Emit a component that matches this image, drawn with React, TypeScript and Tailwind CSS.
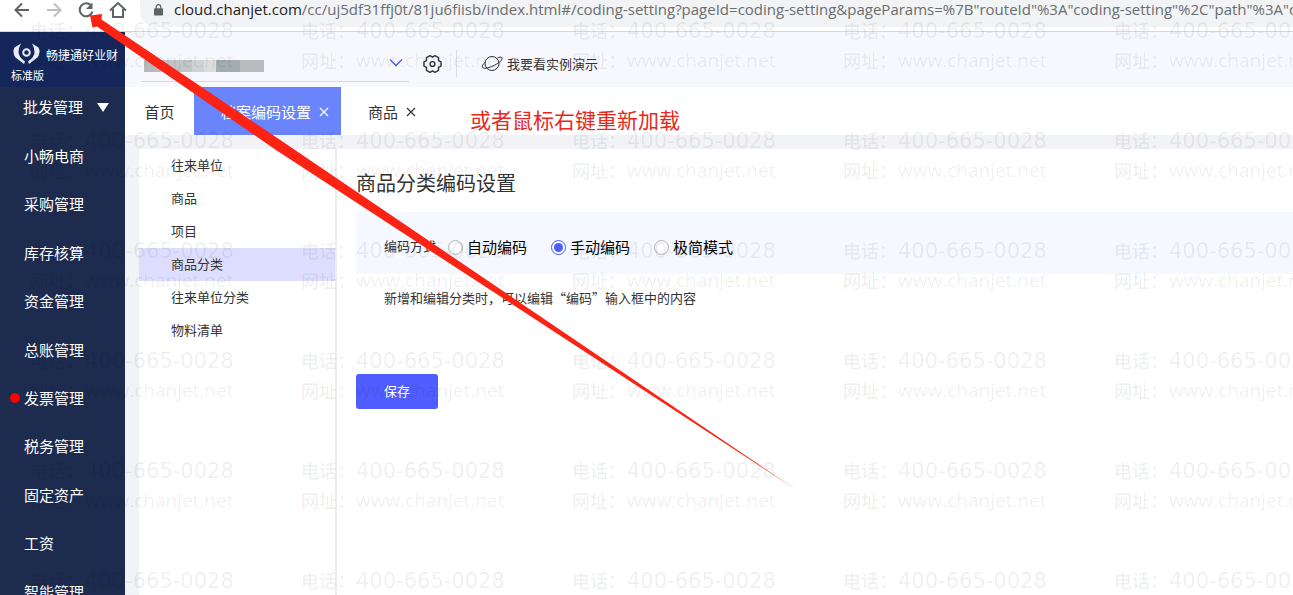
import React from "react";

const modules = ["小畅电商", "采购管理", "库存核算", "资金管理", "总账管理", "发票管理", "税务管理", "固定资产", "工资", "智能管理"];
const categories = ["往来单位", "商品", "项目", "商品分类", "往来单位分类", "物料清单"];
const modes = ["自动编码", "手动编码", "极简模式"];

function BrowserBar() {
  const icon = "flex h-8 w-8 items-center justify-center text-[#5f6368]";
  return (
    <header className="flex h-8 shrink-0 items-start border-b border-[#d5d7da] bg-white">
      <div className="-mt-1.5 flex h-8 shrink-0 pl-1.5">
        <button aria-label="后退" className={icon}>
          <svg width="18" height="18" viewBox="0 0 18 18" fill="none" stroke="currentColor" strokeWidth="2"><path d="M16 9H3M9 2.5 2.5 9 9 15.5" /></svg>
        </button>
        <button aria-label="前进" className="flex h-8 w-8 items-center justify-center text-[#bcbec1]">
          <svg width="18" height="18" viewBox="0 0 18 18" fill="none" stroke="currentColor" strokeWidth="2"><path d="M2 9h13M9 2.5 15.5 9 9 15.5" /></svg>
        </button>
        <button aria-label="重新加载" className={icon}>
          <svg width="18" height="18" viewBox="0 0 18 18" fill="none" stroke="currentColor" strokeWidth="2"><path d="M14.5 5A6.5 6.5 0 1 0 15.5 10.5" /><path d="M15.5 1.5v6.5H9z" fill="currentColor" stroke="none" /></svg>
        </button>
        <button aria-label="主页" className={icon}>
          <svg width="18" height="18" viewBox="0 0 18 18" fill="none" stroke="currentColor" strokeWidth="2"><path d="M1 9.5 9 2l8 7.5M4 8v8h10V8" /></svg>
        </button>
      </div>
      <div className="ml-1.5 flex h-[27px] min-w-0 flex-1 items-start overflow-hidden rounded-bl-2xl bg-[#f1f3f4] pl-3.5">
        <svg className="mt-1 shrink-0" width="9" height="12" viewBox="0 0 10 13"><rect y="4.5" width="10" height="8" rx="1" fill="#5f6368" /><path d="M2.5 5V3a2.5 2.5 0 0 1 5 0v2" fill="none" stroke="#5f6368" strokeWidth="1.4" /></svg>
        <p className="ml-[11px] whitespace-nowrap font-['Open_Sans',sans-serif] text-[15px] leading-[18px] text-[#6a6d71]">
          <span className="text-[#202124]">cloud.chanjet.com</span>
          {'/cc/uj5df31ffj0t/81ju6fiisb/index.html#/coding-setting?pageId=coding-setting&pageParams=%7B"routeId"%3A"coding-setting"%2C"path"%3A"cod'}
        </p>
      </div>
    </header>
  );
}

function Sidebar() {
  return (
    <aside className="w-[125px] shrink-0 overflow-hidden bg-[#1d2b4f] text-white">
      <div className="h-[55px] bg-[#15265a] pl-[11px] pt-2.5">
        <div className="flex items-center gap-1.5">
          <svg className="ml-0.5 shrink-0" width="27" height="22" viewBox="0 0 27 22">
            <g fill="#e8ecf5">
              <path d="M8 .5 1.5 4.5Q-1 9.5 2.5 14.5L11 21l1-2.5Q5.500 14 5.500 9 5.500 5 8 .5z" />
              <path d="M19 .5l6.500 4q2.500 5-1 10L16 21l-1-2.500Q21.500 14 21.500 9 21.500 5 19 .5z" />
            </g>
            <circle cx="13.500" cy="9.500" r="3.300" fill="none" stroke="#e8ecf5" strokeWidth="2" />
          </svg>
          <span className="whitespace-nowrap pt-1 text-xs leading-5">畅捷通好业财</span>
        </div>
        <p className="text-[11px] leading-5">标准版</p>
      </div>
      <nav>
        <a href="#wholesale" className="flex h-[45px] items-center gap-3.5 pl-[23px] pb-1 text-[15px]">
          批发管理
          <svg width="12" height="9" viewBox="0 0 12 9"><path d="M0 0h12L6 9z" fill="white" /></svg>
        </a>
        <div className="grid h-[484px] grid-rows-10">
          {modules.map((m) => (
            <a key={m} href={"#" + m} className="flex items-center pl-2.5 text-[15px]">
              <span className={m === "发票管理" ? "mr-1 h-2.5 w-2.5 rounded-full bg-[#fe0000]" : "mr-1 h-2.5 w-2.5"} />
              {m}
            </a>
          ))}
        </div>
      </nav>
    </aside>
  );
}

function Toolbar() {
  return (
    <div className="flex h-[55px] shrink-0 items-center bg-[#f7f8fd] pl-4 pt-2">
      <button aria-label="选择账套" className="-mt-2 flex h-[50px] w-[268px] items-center justify-between self-start border-b border-[#d9dade] pl-[3px] pr-1.5 pt-3">
        <span className="mt-1.5 flex h-3 w-[120px] overflow-hidden">
          <i className="w-4 bg-[#b8b8bc]" /><i className="w-8 bg-[#c3c4c6]" /><i className="w-3 bg-[#d0d1d3]" /><i className="w-3 bg-[#dcdcd9]" /><i className="w-6 bg-[#a2adb0]" /><i className="w-6 bg-[#bababd]" />
        </span>
        <svg width="14" height="8" viewBox="0 0 14 8" fill="none" stroke="#4f5dea" strokeWidth="1.3"><path d="m1 .5 6 6 6-6" /></svg>
      </button>
      <button aria-label="设置" className="ml-3.5">
        <svg width="19" height="18" viewBox="0 0 19 18" fill="none" stroke="#333" strokeWidth="1.4" strokeLinejoin="round"><path d="M18 6.900V11.100L15.400 12.400 15.600 15.300 11.900 17.300 9.500 15.800 7.100 17.300 3.400 15.300 3.600 12.400 1 11.100V6.900L3.600 5.600 3.400 2.700 7.100.7 9.500 2.200 11.900.7 15.600 2.700 15.400 5.600z" /><circle cx="9.500" cy="9" r="2.400" /></svg>
      </button>
      <span className="ml-3.5 h-[27px] w-px bg-[#dcdde2]" />
      <a href="#demo" className="ml-6 flex items-center gap-1 text-[13px] text-[#333]">
        <svg width="22" height="18" viewBox="0 0 22 18" fill="none" stroke="#333" strokeWidth="1"><circle cx="11" cy="8.5" r="7" /><path d="M4.5 7C-.5 11 0 15 8 12.5S23 4.500 20.800 2.500c-1-.8-3-.2-4.500.8" /></svg>
        <span className="pt-0.5">我要看实例演示</span>
      </a>
    </div>
  );
}

function Close() {
  return (
    <button aria-label="关闭">
      <svg width="10" height="10" viewBox="0 0 10 10" stroke="currentColor" strokeWidth="1.2"><path d="m1 1 8 8M9 1 1 9" /></svg>
    </button>
  );
}

function Tabs() {
  return (
    <div className="flex h-12 shrink-0 bg-white text-[15px] text-[#333]">
      <button className="w-[69px] pt-0.5">首页</button>
      <div className="flex w-[147px] items-center gap-2 bg-[#6a85fc] pl-[27px] pt-0.5 text-white"><button>档案编码设置</button><Close /></div>
      <div className="flex items-center gap-2 pl-[27px] pt-0.5"><button>商品</button><Close /></div>
      <p className="ml-[54px] pt-[17px] text-[21px] leading-8 text-[#e8281c]">或者鼠标右键重新加载</p>
    </div>
  );
}

function CodingSetting() {
  return (
    <div className="flex min-h-0 flex-1 bg-[#f1f3f6] pl-3.5 pt-3.5 text-[13px] text-[#333]">
      <nav className="w-[198px] shrink-0 border-r-2 border-[#ededf0] bg-white">
        {categories.map((c) => (
          <a key={c} href={"#" + c} className={c === "商品分类" ? "flex h-[33px] items-center bg-[#dddeff] pl-8" : "flex h-[33px] items-center pl-8"}>{c}</a>
        ))}
      </nav>
      <main className="min-w-0 flex-1 bg-white pl-[19px] pt-[19px]">
        <h1 className="text-xl leading-8">商品分类编码设置</h1>
        <fieldset className="mt-3 flex h-[62px] items-center bg-[#f5f8ff] pl-7 pt-2">
          <span className="w-16">编码方式</span>
          {modes.map((m) => (
            <label key={m} className="mr-6 flex items-center gap-1 text-[15px] text-black">
              <input type="radio" name="mode" defaultChecked={m === "手动编码"} className="h-[15px] w-[15px] appearance-none rounded-full border border-[#b5b5b5] bg-white bg-clip-content p-0.5 checked:border-[#4f5dff] checked:bg-[#4f5dff]" />
              {m}
            </label>
          ))}
        </fieldset>
        <p className="mt-3.5 pl-7 font-['Noto_Sans_CJK_SC',sans-serif] leading-5">新增和编辑分类时，可以编辑“编码”输入框中的内容</p>
        <button className="mt-[66px] h-[35px] w-[82px] rounded-[3px] bg-[#4f5dff] text-white">保存</button>
      </main>
    </div>
  );
}

function Watermark() {
  return (
    <div aria-hidden="true" className="pointer-events-none absolute inset-0 grid auto-rows-[110px] grid-cols-[repeat(5,271px)] overflow-hidden pl-[30px] pt-4 text-lg font-medium text-black/7 select-none">
      {Array.from({ length: 30 }, (_, i) => (
        <div key={i} className="whitespace-nowrap">
          <div className="flex"><span className="w-[55px] leading-[30px]">电话：</span><span className="font-['DejaVu_Sans',sans-serif] text-[21px] leading-[30px]">400-665-0028</span></div>
          <div className="flex"><span className="w-[55px] leading-[30px]">网址：</span><span className="text-[19px] leading-[28px]">www.chanjet.net</span></div>
        </div>
      ))}
    </div>
  );
}

export default function App() {
  return (
    <div lang="zh-CN" className="relative flex h-screen flex-col overflow-hidden bg-white font-['Open_Sans','Noto_Sans_CJK_SC',sans-serif]">
      <BrowserBar />
      <div className="flex min-h-0 flex-1">
        <Sidebar />
        <div className="flex min-w-0 flex-1 flex-col">
          <Toolbar />
          <Tabs />
          <CodingSetting />
        </div>
      </div>
      <Watermark />
      <svg aria-hidden="true" className="pointer-events-none absolute left-0 top-0" width="800" height="500" viewBox="0 0 800 500">
        <path d="M90 15.5 102 14l-.5 5.5L295 150 795 489 276 150 97 26.5l-4.5 1z" fill="#fb2314" />
      </svg>
    </div>
  );
}
